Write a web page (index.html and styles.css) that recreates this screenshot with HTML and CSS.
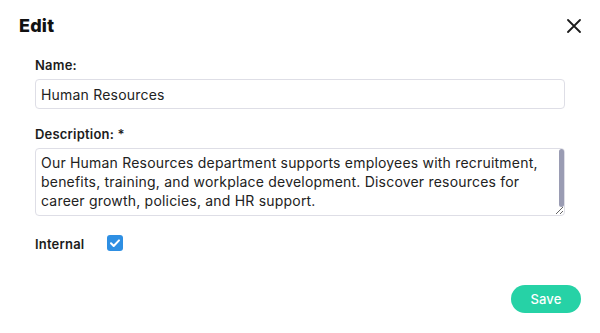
FILE: index.html
```html
<!DOCTYPE html>
<html lang="en">
<head>
<meta charset="utf-8">
<title>Edit</title>
<link rel="stylesheet" href="styles.css">
</head>
<body>
<div class="dialog">
  <header class="head">
    <h2 class="title">Edit</h2>
    <button class="close" type="button" aria-label="Close">
      <svg width="14" height="14" viewBox="0 0 14 14"><path d="M1 1L13 13M13 1L1 13" stroke="#1c1c1c" stroke-width="1.8" stroke-linecap="round" fill="none"/></svg>
    </button>
  </header>
  <form class="body">
    <div class="field">
      <label class="label" for="name">Name:</label>
      <input class="input" id="name" type="text" value="Human Resources">
    </div>
    <div class="field">
      <label class="label" for="desc">Description: *</label>
      <div class="textarea-wrap">
        <textarea class="textarea" id="desc">Our Human Resources department supports employees with recruitment, benefits, training, and workplace development. Discover resources for career growth, policies, and HR support.</textarea>
        <span class="scroll-thumb" aria-hidden="true"></span>
      </div>
    </div>
    <div class="check-row">
      <span class="label check-label">Internal</span>
      <span class="checkbox">
        <svg width="16" height="16" viewBox="0 0 16 16"><path d="M4 8.3L6.7 11L12 5.4" stroke="#fff" stroke-width="2" fill="none" stroke-linecap="round" stroke-linejoin="round"/></svg>
      </span>
    </div>
  </form>
  <footer class="foot">
    <button class="save" type="button">Save</button>
  </footer>
</div>
</body>
</html>
```

FILE: styles.css
```css
html, body {
  margin: 0;
  padding: 0;
  background: #fff;
}
body {
  font-family: Inter, "Open Sans", sans-serif;
  color: #1f1f1f;
  letter-spacing: 0.2px;
}
.dialog {
  width: 600px;
  height: 333px;
  box-sizing: border-box;
  display: flex;
  flex-direction: column;
}
.head {
  display: flex;
  justify-content: space-between;
  align-items: center;
  padding: 13px 19px 0 19px;
  height: 26px;
}
.title {
  margin: 0;
  font-size: 18px;
  font-weight: 800;
  line-height: 26px;
  color: #111;
}
.close {
  border: 0;
  background: none;
  padding: 0;
  width: 14px;
  height: 14px;
  display: block;
}
.close svg { display: block; }
.body {
  display: flex;
  flex-direction: column;
  padding: 17px 35px 0 35px;
  margin: 0;
}
.field {
  display: flex;
  flex-direction: column;
  margin-bottom: 16px;
}
.label {
  font-size: 13px;
  font-weight: 600;
  line-height: 18px;
  color: #1c1c1c;
  margin-bottom: 6px;
}
.input {
  box-sizing: border-box;
  height: 30px;
  width: 100%;
  border: 1px solid #dedee6;
  border-radius: 4px;
  padding: 0 5px;
  margin-top: -1px;
  font-family: inherit;
  font-size: 14px;
  letter-spacing: 0.2px;
  color: #222;
  outline: none;
}
.textarea-wrap {
  position: relative;
  margin-top: -1px;
}
.textarea {
  box-sizing: border-box;
  display: block;
  height: 68px;
  width: 100%;
  border: 1px solid #dedee6;
  border-radius: 4px;
  padding: 4px 14px 4px 5px;
  margin: 0;
  font-family: inherit;
  font-size: 14px;
  line-height: 19px;
  letter-spacing: 0.2px;
  color: #222;
  outline: none;
  overflow-y: auto;
  resize: both;
}
.scroll-thumb {
  position: absolute;
  top: 1px;
  right: 1px;
  width: 5px;
  height: 58px;
  border-radius: 3px;
  background: #9a9cb3;
  pointer-events: none;
}
.check-row {
  display: flex;
  align-items: center;
  margin-top: 3px;
}
.check-label {
  width: 72px;
  margin-bottom: 0;
}
.checkbox {
  width: 16px;
  height: 16px;
  border-radius: 3px;
  background: #2e8fe3;
  display: block;
  margin-top: -2px;
}
.checkbox svg { display: block; }
.foot {
  margin-top: auto;
  display: flex;
  justify-content: flex-end;
  padding: 0 19px 20px 0;
}
.save {
  width: 70px;
  height: 28px;
  border: 0;
  border-radius: 14px;
  background: #26d2a6;
  color: #fff;
  font-family: inherit;
  font-size: 13px;
  font-weight: 500;
  letter-spacing: 0.2px;
  padding: 0;
}
```
